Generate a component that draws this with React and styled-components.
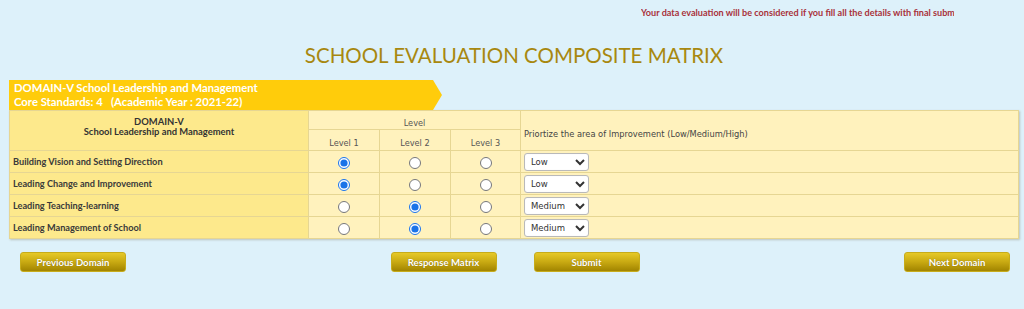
import React from "react";
import styled, { createGlobalStyle } from "styled-components";

const Global = createGlobalStyle`
  html, body { margin: 0; padding: 0; background: #ddf1fa; }
  body { font-family: "Lato", "Open Sans", sans-serif; }
`;

const Page = styled.div`
  width: 1024px;
  min-height: 309px;
  box-sizing: border-box;
  padding: 0 5px 0 9px;
  background: #ddf1fa;
`;

const NoticeBar = styled.div`
  height: 26px;
  display: flex;
  padding-left: 632px;
`;

const Marquee = styled.div`
  width: 313px;
  overflow: hidden;
  white-space: nowrap;
  font-family: "Lato", sans-serif;
  font-weight: 700;
  font-size: 9.1px;
  line-height: 26px;
  color: #a8313b;
`;

const Title = styled.h1`
  margin: 14px 0 10px;
  text-align: center;
  font-family: "Lato", sans-serif;
  font-weight: 400;
  font-size: 20.5px;
  line-height: 30px;
  color: #a8880f;
`;

const Ribbon = styled.div`
  width: 433px;
  height: 30px;
  box-sizing: border-box;
  padding: 1px 0 0 5px;
  background: #ffcc0b;
  clip-path: polygon(0 0, calc(100% - 9px) 0, 100% 50%, calc(100% - 9px) 100%, 0 100%);
  color: #fff;
  font-family: "Lato", sans-serif;
  font-weight: 700;
  font-size: 11.3px;
  line-height: 14px;
  white-space: pre;
`;

const Table = styled.table`
  width: 1010px;
  border-collapse: collapse;
  background: #fff2bd;
  box-shadow: 1px 1px 2px rgba(120, 110, 80, 0.35);
`;

const Cell = styled.td`
  border: 1px solid #e6d693;
  padding: 0 0 0 ${(p) => (p.$pad ? 3 : 0)}px;
  height: ${(p) => p.$h || 20}px;
  text-align: ${(p) => p.$align || "center"};
  background: ${(p) => (p.$strong ? "#fde98c" : "#fff2bd")};
  vertical-align: middle;
  font-weight: 400;
  line-height: 1;
  box-sizing: border-box;
`;

const DomainHead = styled.div`
  font-family: "Lato", sans-serif;
  font-weight: 700;
  font-size: 9.4px;
  line-height: 10px;
  color: #333;
  padding-bottom: 8px;
`;

const SmallHead = styled.span`
  font-family: "DejaVu Sans", Verdana, sans-serif;
  font-weight: 400;
  font-size: 8.2px;
  color: #555;
`;

const PriorityHead = styled.span`
  font-family: "DejaVu Sans", Verdana, sans-serif;
  font-weight: 400;
  font-size: 8.3px;
  color: #444;
`;

const RowLabel = styled.span`
  display: block;
  padding-left: 3px;
  font-family: "Lato", sans-serif;
  font-weight: 700;
  font-size: 9.2px;
  color: #3a3a3a;
`;

const Radio = styled.input.attrs({ type: "radio" })`
  width: 12px;
  height: 12px;
  margin: 0;
  vertical-align: middle;
  accent-color: #1a73e8;
`;

const Select = styled.select`
  width: 65px;
  height: 18px;
  margin: 0;
  vertical-align: middle;
  padding: 0 0 0 2px;
  font-family: "DejaVu Sans", Verdana, sans-serif;
  font-size: 8.5px;
  color: #333;
  background: #fff;
  border: 1px solid #b9b9b9;
  border-radius: 3px;
  box-shadow: inset 0 0 1px rgba(0,0,0,0.1);
`;

const ButtonBar = styled.div`
  display: flex;
  justify-content: space-between;
  align-items: center;
  padding: 13px 9px 0 11px;
`;

const MidGroup = styled.div`
  display: flex;
  gap: 37px;
`;

const Button = styled.button`
  width: 106px;
  height: 20px;
  border: 1px solid #c7ac1b;
  border-radius: 3px;
  background: linear-gradient(to bottom, #e6c928 0%, #c8a912 50%, #a18400 100%);
  color: #fff;
  font-family: "Lato", sans-serif;
  font-weight: 700;
  font-size: 9.6px;
  text-shadow: 0 0 1px rgba(80, 60, 0, 0.6);
  cursor: pointer;
  padding: 0;
`;

const rows = [
  { label: "Building Vision and Setting Direction", level: 1, pr: "Low" },
  { label: "Leading Change and Improvement", level: 1, pr: "Low" },
  { label: "Leading Teaching-learning", level: 2, pr: "Medium" },
  { label: "Leading Management of School", level: 2, pr: "Medium" },
];

export default function App() {
  return (
    <Page>
      <Global />
      <NoticeBar>
        <Marquee>Your data evaluation will be considered if you fill all the details with final submission</Marquee>
      </NoticeBar>
      <Title>SCHOOL EVALUATION COMPOSITE MATRIX</Title>
      <Ribbon>{"DOMAIN-V School Leadership and Management\nCore Standards: 4   (Academic Year : 2021-22)"}</Ribbon>
      <Table>
        <colgroup>
          <col style={{ width: 299 }} />
          <col style={{ width: 71 }} />
          <col style={{ width: 71 }} />
          <col style={{ width: 70 }} />
          <col />
        </colgroup>
        <thead>
          <tr>
            <Cell as="th" rowSpan={2} $strong>
              <DomainHead>DOMAIN-V<br />School Leadership and Management</DomainHead>
            </Cell>
            <Cell as="th" colSpan={3} $h={19}><SmallHead>Level</SmallHead></Cell>
            <Cell as="th" rowSpan={2} $align="left" $pad>
              <PriorityHead>Priortize the area of Improvement (Low/Medium/High)</PriorityHead>
            </Cell>
          </tr>
          <tr>
            <Cell as="th" $h={21}><SmallHead>Level 1</SmallHead></Cell>
            <Cell as="th" $h={21}><SmallHead>Level 2</SmallHead></Cell>
            <Cell as="th" $h={21}><SmallHead>Level 3</SmallHead></Cell>
          </tr>
        </thead>
        <tbody>
          {rows.map((r, i) => (
            <tr key={i}>
              <Cell $strong $align="left" $h={22}><RowLabel>{r.label}</RowLabel></Cell>
              {[1, 2, 3].map((l) => (
                <Cell key={l} $h={22}>
                  <Radio name={`r${i}`} defaultChecked={r.level === l} />
                </Cell>
              ))}
              <Cell $align="left" $pad $h={22}>
                <Select defaultValue={r.pr}>
                  <option>Low</option>
                  <option>Medium</option>
                  <option>High</option>
                </Select>
              </Cell>
            </tr>
          ))}
        </tbody>
      </Table>
      <ButtonBar>
        <Button>Previous Domain</Button>
        <MidGroup>
          <Button>Response Matrix</Button>
          <Button>Submit</Button>
        </MidGroup>
        <Button>Next Domain</Button>
      </ButtonBar>
    </Page>
  );
}
